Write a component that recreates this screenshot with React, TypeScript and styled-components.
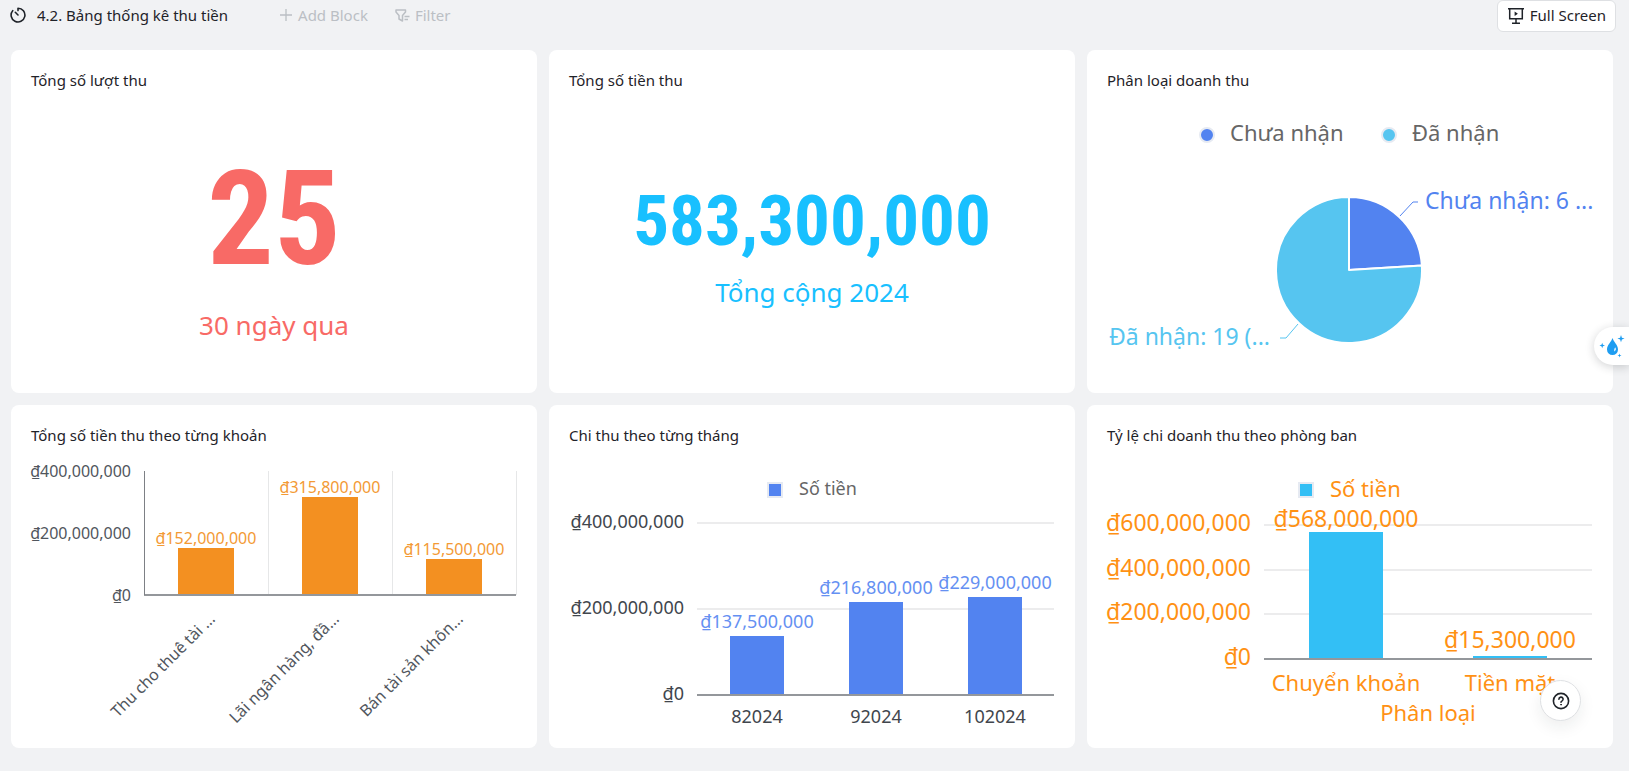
import React from "react";
import styled, { createGlobalStyle } from "styled-components";

const FONT = '"Noto Sans", "Open Sans", "Liberation Sans", sans-serif';

const GlobalStyle = createGlobalStyle`
  *, *::before, *::after { box-sizing: border-box; }
  body {
    margin: 0;
    background: #f1f2f4;
    color: #1f2329;
    font-family: ${FONT};
  }
`;

const Page = styled.div`
  display: flex;
  flex-direction: column;
  min-height: 100vh;
  padding-bottom: 23px;
`;

const Toolbar = styled.header`
  display: flex;
  align-items: flex-start;
  height: 32px;
  padding: 0 13px 0 10px;
`;

const PageTitle = styled.h1`
  display: flex;
  align-items: center;
  gap: 11px;
  margin: 0 51px 0 0;
  font-size: 15px;
  font-weight: 400;
  line-height: 30px;
  white-space: nowrap;
`;

const GhostButton = styled.button`
  display: flex;
  align-items: center;
  gap: 5px;
  margin-right: 27px;
  padding: 0;
  border: 0;
  background: none;
  color: #bbbfc4;
  font: 15px/30px ${FONT};
  white-space: nowrap;
`;

const OutlineButton = styled.button`
  display: flex;
  align-items: center;
  gap: 6px;
  height: 32px;
  margin-left: auto;
  padding: 0 9px 2px 10px;
  border: 1px solid #dee0e3;
  border-radius: 6px;
  background: #fff;
  color: #1f2329;
  font: 15px/24px ${FONT};
  white-space: nowrap;
  cursor: pointer;
`;

const Grid = styled.main`
  display: grid;
  grid-template-columns: repeat(3, minmax(0, 1fr));
  gap: 12px;
  padding: 18px 16px 0 11px;
`;

const Card = styled.section`
  display: flex;
  flex-direction: column;
  border-radius: 8px;
  background: #fff;
  overflow: hidden;
`;

const CardTitle = styled.h2`
  margin: 0;
  padding: 18px 20px 0;
  font-size: 15px;
  font-weight: 400;
  line-height: 24px;
`;

const Metric = styled.div<{ $color: string; $gap: number }>`
  display: flex;
  flex: 1;
  flex-direction: column;
  align-items: center;
  justify-content: center;
  gap: ${(p) => p.$gap}px;
  padding-top: 12px;
  color: ${(p) => p.$color};
`;

const MetricValue = styled.div<{ $size: number }>`
  font-family: "Roboto Condensed", Roboto, sans-serif;
  font-size: ${(p) => p.$size}px;
  font-weight: 700;
  line-height: 1;
`;

const MetricNote = styled.div`
  font-size: 26px;
  line-height: 40px;
`;

const Chart = styled.svg`
  display: block;
  width: 100%;
  height: auto;
  font-family: ${FONT};
`;

const AssistantTab = styled.button`
  position: fixed;
  top: 327px;
  right: 0;
  display: flex;
  align-items: center;
  width: 35px;
  height: 38px;
  padding: 0 0 0 5px;
  border: 0;
  border-radius: 19px 0 0 19px;
  background: #fff;
  box-shadow: 0 2px 10px rgba(31, 35, 41, 0.2);
  cursor: pointer;
`;

const HelpButton = styled.button`
  position: fixed;
  right: 48px;
  bottom: 50px;
  display: flex;
  align-items: center;
  justify-content: center;
  width: 41px;
  height: 41px;
  padding: 0;
  border: 1px solid #dee0e3;
  border-radius: 50%;
  background: #fff;
  box-shadow: 0 6px 16px rgba(31, 35, 41, 0.08);
  color: #1f2329;
  cursor: pointer;
`;

const TimerIcon = () => (
  <svg width="16" height="16" viewBox="0 0 16 16" fill="none" stroke="#1f2329" strokeWidth="1.6" strokeLinecap="round" strokeLinejoin="round" aria-hidden="true">
    <path d="M8 1.200v2.400M8 1.200a6.900 6.900 0 1 1-5.300 2.500" />
    <path d="M5.300 5.300l2.700 2.700" />
  </svg>
);

const PlusIcon = () => (
  <svg width="14" height="14" viewBox="0 0 14 14" fill="none" stroke="currentColor" strokeWidth="1.3" aria-hidden="true">
    <path d="M7 1v12M1 7h12" />
  </svg>
);

const FilterIcon = () => (
  <svg width="15" height="15" viewBox="0 0 15 15" fill="none" stroke="currentColor" strokeWidth="1.5" strokeLinejoin="round" aria-hidden="true">
    <path d="M1 2h9.500v2L7.500 7.500v5.500L4 11V7.500L1 4z" />
    <path d="M9.500 8.500H14.500M9.500 11.500H13" />
  </svg>
);

const ScreenIcon = () => (
  <svg width="16" height="20" viewBox="0 -2 16 20" fill="none" stroke="currentColor" strokeWidth="1.5" aria-hidden="true">
    <path d="M0 1.700h16M1.700 1.700v10h12.600v-10M8 11.700v4.300M4 16.300h8" />
    <path d="M6.600 4.600v4.400l3.300-2.200z" fill="currentColor" stroke="none" />
  </svg>
);

const DropIcon = () => (
  <svg width="27" height="26" viewBox="0 0 27 26" fill="#1e9df1" aria-hidden="true">
    <path d="M13.500 5C12.500 8.500 8 12 8 16.500a5.500 5.500 0 0 0 11 0C19 12 14.500 8.500 13.500 5z" />
    <path d="M16.200 14.200c1.100 1.700.8 3.200-.9 4.200-.3-1.600.1-2.700.9-4.200z" fill="#fff" />
    <path d="M22 2l.9 2.700 2.700.9-2.700.9L22 9.200l-.9-2.700-2.700-.9 2.700-.9z" />
    <path d="M3.200 9.700l.7 2.100 2.100.7-2.100.7-.7 2.100-.7-2.100-2.100-.7 2.100-.7z" />
    <path d="M20.500 20.500l.5 1.500 1.500.5-1.500.5-.5 1.500-.5-1.500-1.500-.5 1.500-.5z" />
  </svg>
);

const HelpIcon = () => (
  <svg width="18" height="18" viewBox="0 0 18 18" fill="none" stroke="currentColor" strokeWidth="1.6" strokeLinecap="round" aria-hidden="true">
    <circle cx="9" cy="9" r="7.6" />
    <path d="M6.900 7.200a2.100 2.100 0 1 1 3 1.900c-.6.300-.9.600-.9 1.200" />
    <circle cx="9" cy="12.700" r=".4" fill="currentColor" strokeWidth="1" />
  </svg>
);

type Bar = { name: string; value: number };

type BarChartProps = {
  label: string;
  bars: Bar[];
  max: number;
  step: number;
  plot: { left: number; right: number; top: number; bottom: number };
  barWidth: number;
  barColor: string;
  valueColor: string;
  axisColor: string;
  valueSize: number;
  nameSize: number;
  valueGap: number;
  nameGap: number;
  tickGap: number;
  vertical?: boolean;
  slanted?: boolean;
  axisName?: string;
  legend?: { name: string; x: number; size: number; baseline: number; color: string };
};

const money = (n: number) => "₫" + n.toLocaleString("en-US");

function BarChart(p: BarChartProps) {
  const { left, right, top, bottom } = p.plot;
  const slot = (right - left) / p.bars.length;
  const y = (v: number) => Math.round(bottom - ((bottom - top) * v) / p.max);
  const ticks: number[] = [];
  for (let t = p.max; t >= 0; t -= p.step) ticks.push(t);

  return (
    <Chart viewBox="0 0 526 301" role="img" aria-label={p.label}>
      {p.vertical
        ? p.bars.map((b, i) => (
            <rect key={b.name} x={Math.round(left + slot * (i + 1))} y={top} width="1" height={bottom - top} fill="#e6e7e8" />
          ))
        : ticks.slice(0, -1).map((t) => (
            <rect key={t} x={left} y={y(t) - 1} width={right - left} height="2" fill="#ececed" />
          ))}
      {p.legend && (
        <g>
          <rect x={p.legend.x} y="36" width="14" height="14" fill={p.barColor} stroke="#e6eaf2" strokeWidth="2" />
          <text x={p.legend.x + 31} y={p.legend.baseline} fontSize={p.legend.size} fill={p.legend.color}>
            {p.legend.name}
          </text>
        </g>
      )}
      {ticks.map((t) => (
        <text key={t} x={left - 13} y={y(t) + p.tickGap} textAnchor="end" fontSize={p.valueSize} fill={p.axisColor}>
          {money(t)}
        </text>
      ))}
      {p.bars.map((b, i) => {
        const cx = Math.round(left + slot * (i + 0.5));
        return (
          <g key={b.name}>
            <rect x={cx - p.barWidth / 2} y={y(b.value)} width={p.barWidth} height={bottom - y(b.value)} fill={p.barColor} />
            {/* value labels never rise above the top of the plot */}
            <text x={cx} y={Math.max(top + 2, y(b.value) - p.valueGap)} textAnchor="middle" fontSize={p.valueSize} fill={p.valueColor}>
              {money(b.value)}
            </text>
            {p.slanted ? (
              <text transform={`translate(${cx + 10} ${bottom + p.nameGap}) rotate(-45)`} textAnchor="end" fontSize={p.nameSize} fill={p.axisColor}>
                {b.name}
              </text>
            ) : (
              <text x={cx} y={bottom + p.nameGap} textAnchor="middle" fontSize={p.nameSize} fill={p.axisColor}>
                {b.name}
              </text>
            )}
          </g>
        );
      })}
      <rect x={left} y={bottom - 1} width={right - left} height="2" fill="#94979b" />
      {p.vertical && <rect x={left} y={top} width="1" height={bottom - top} fill="#7d8085" />}
      {p.axisName && (
        <text x={(left + right) / 2} y={bottom + 62} textAnchor="middle" fontSize={p.nameSize} fill={p.axisColor}>
          {p.axisName}
        </text>
      )}
    </Chart>
  );
}

const BLUE = "#5283f0";
const SKY = "#56c5f0";
const ORANGE = "#ff9114";

function PieChart() {
  const share = (6 / 25) * 2 * Math.PI;
  const cx = 262;
  const cy = 178;
  const r = 73;
  const ex = cx + r * Math.sin(share);
  const ey = cy - r * Math.cos(share);
  return (
    <Chart viewBox="0 0 526 301" role="img" aria-label="Phân loại doanh thu">
      <circle cx="120" cy="43" r="7" fill={BLUE} stroke="#e6eaf2" strokeWidth="2" />
      <text x="143" y="49" fontSize="22" fill="#666">Chưa nhận</text>
      <circle cx="302" cy="43" r="7" fill={SKY} stroke="#e6eaf2" strokeWidth="2" />
      <text x="325" y="49" fontSize="22" fill="#666">Đã nhận</text>
      <g stroke="#fff" strokeWidth="2" strokeLinejoin="round">
        <path d={`M${cx} ${cy}V${cy - r}A${r} ${r} 0 0 1 ${ex} ${ey}Z`} fill={BLUE} />
        <path d={`M${cx} ${cy}L${ex} ${ey}A${r} ${r} 0 1 1 ${cx} ${cy - r}Z`} fill={SKY} />
      </g>
      <path d="M313 124L326 110H331" fill="none" stroke={BLUE} />
      <text x="338" y="117" fontSize="23" fill={BLUE}>Chưa nhận: 6 ...</text>
      <path d="M211 232L199 246H193" fill="none" stroke={SKY} />
      <text x="183" y="253" textAnchor="end" fontSize="23" fill={SKY}>Đã nhận: 19 (...</text>
    </Chart>
  );
}

export default function App() {
  return (
    <>
      <GlobalStyle />
      <Page>
        <Toolbar>
          <PageTitle>
            <TimerIcon />
            4.2. Bảng thống kê thu tiền
          </PageTitle>
          <GhostButton type="button" disabled>
            <PlusIcon />
            Add Block
          </GhostButton>
          <GhostButton type="button" disabled>
            <FilterIcon />
            Filter
          </GhostButton>
          <OutlineButton type="button">
            <ScreenIcon />
            Full Screen
          </OutlineButton>
        </Toolbar>
        <Grid>
          <Card>
            <CardTitle>Tổng số lượt thu</CardTitle>
            <Metric $color="#f86a66" $gap={20}>
              <MetricValue $size={132}>25</MetricValue>
              <MetricNote>30 ngày qua</MetricNote>
            </Metric>
          </Card>
          <Card>
            <CardTitle>Tổng số tiền thu</CardTitle>
            <Metric $color="#18c0ff" $gap={16}>
              <MetricValue $size={71}>583,300,000</MetricValue>
              <MetricNote>Tổng cộng 2024</MetricNote>
            </Metric>
          </Card>
          <Card>
            <CardTitle>Phân loại doanh thu</CardTitle>
            <PieChart />
          </Card>
          <Card>
            <CardTitle>Tổng số tiền thu theo từng khoản</CardTitle>
            <BarChart
              label="Tổng số tiền thu theo từng khoản"
              bars={[
                { name: "Thu cho thuê tài ...", value: 152000000 },
                { name: "Lãi ngân hàng, đầ...", value: 315800000 },
                { name: "Bán tài sản khôn...", value: 115500000 },
              ]}
              max={400000000}
              step={200000000}
              plot={{ left: 133, right: 505, top: 24, bottom: 148 }}
              barWidth={56}
              barColor="#f39021"
              valueColor="#f39a35"
              axisColor="#51565d"
              valueSize={16}
              nameSize={16}
              valueGap={4}
              nameGap={25}
              tickGap={6}
              vertical
              slanted
            />
          </Card>
          <Card>
            <CardTitle>Chi thu theo từng tháng</CardTitle>
            <BarChart
              label="Chi thu theo từng tháng"
              bars={[
                { name: "82024", value: 137500000 },
                { name: "92024", value: 216800000 },
                { name: "102024", value: 229000000 },
              ]}
              max={400000000}
              step={200000000}
              plot={{ left: 148, right: 505, top: 76, bottom: 248 }}
              barWidth={54}
              barColor={BLUE}
              valueColor="#6590f2"
              axisColor="#41464d"
              valueSize={18}
              nameSize={18}
              valueGap={8}
              nameGap={28}
              tickGap={5}
              legend={{ name: "Số tiền", x: 219, size: 18, baseline: 48, color: "#666" }}
            />
          </Card>
          <Card>
            <CardTitle>Tỷ lệ chi doanh thu theo phòng ban</CardTitle>
            <BarChart
              label="Tỷ lệ chi doanh thu theo phòng ban"
              bars={[
                { name: "Chuyển khoản", value: 568000000 },
                { name: "Tiền mặt", value: 15300000 },
              ]}
              max={600000000}
              step={200000000}
              plot={{ left: 177, right: 505, top: 78, bottom: 212 }}
              barWidth={74}
              barColor="#33bff5"
              valueColor={ORANGE}
              axisColor={ORANGE}
              valueSize={23}
              nameSize={22}
              valueGap={8}
              nameGap={32}
              tickGap={6}
              axisName="Phân loại"
              legend={{ name: "Số tiền", x: 212, size: 22, baseline: 50, color: ORANGE }}
            />
          </Card>
        </Grid>
      </Page>
      <AssistantTab type="button" aria-label="Assistant">
        <DropIcon />
      </AssistantTab>
      <HelpButton type="button" aria-label="Help">
        <HelpIcon />
      </HelpButton>
    </>
  );
}
